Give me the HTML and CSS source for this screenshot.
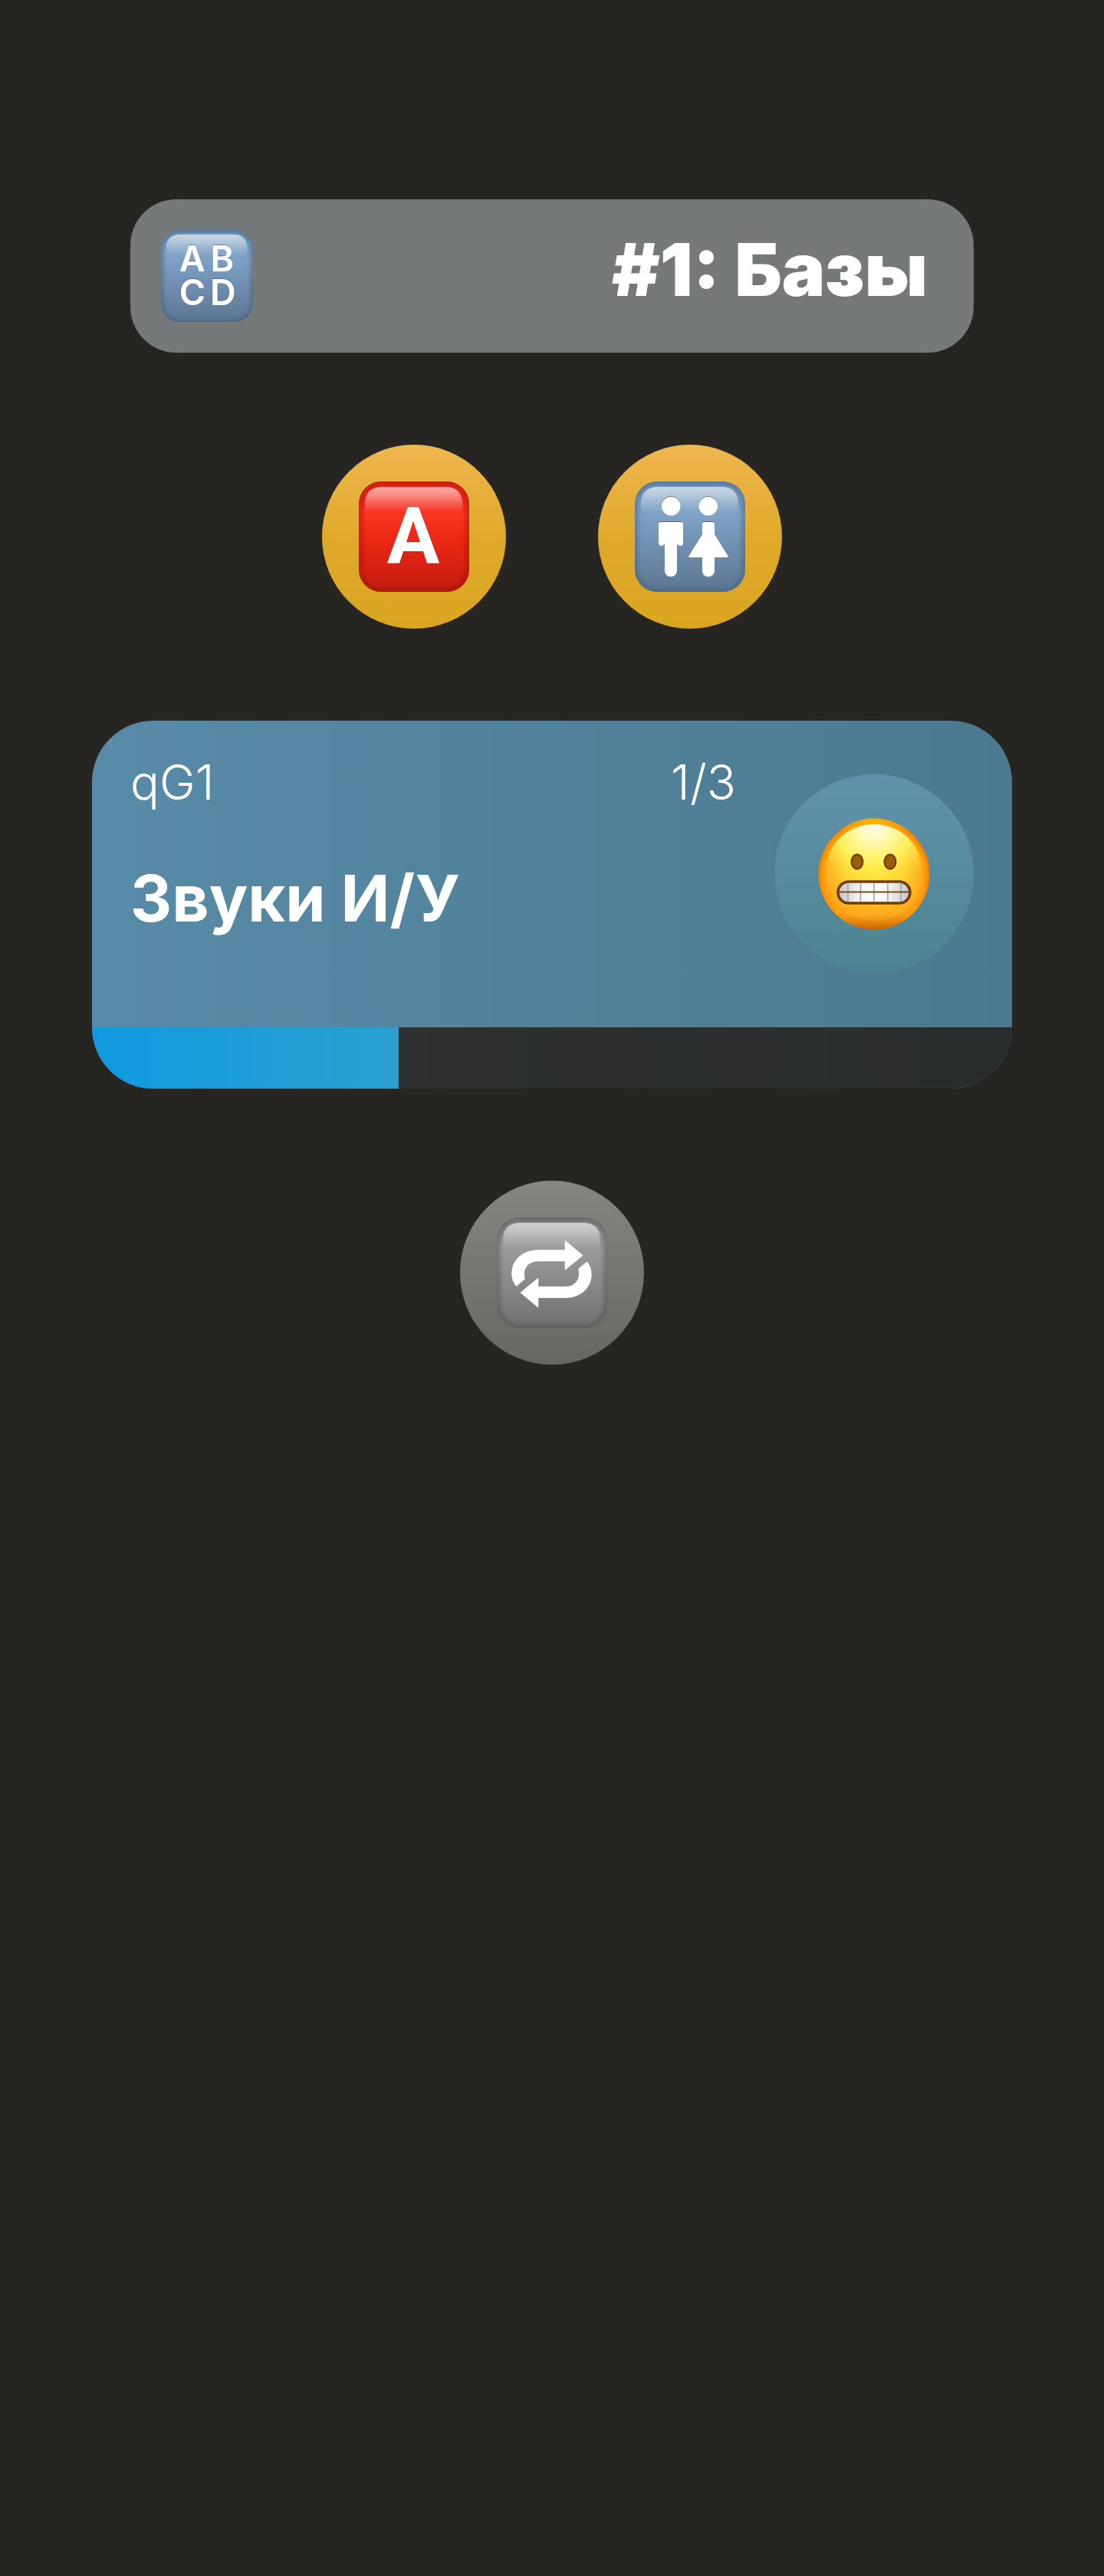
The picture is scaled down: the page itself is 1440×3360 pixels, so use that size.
FILE: index.html
```html
<!DOCTYPE html>
<html lang="ru">
<head>
<meta charset="utf-8">
<meta name="viewport" content="width=device-width, initial-scale=1">
<title>#1: Базы</title>
<link rel="stylesheet" href="styles.css">
</head>
<body>
<svg class="defs" aria-hidden="true">
  <defs>
    <linearGradient id="blue" x2="0" y2="1">
      <stop offset="0" stop-color="#6f93b8"/><stop offset=".28" stop-color="#7fa3c8"/><stop offset="1" stop-color="#5c7690"/>
    </linearGradient>
    <linearGradient id="red" x2="0" y2="1">
      <stop offset="0" stop-color="#f22314"/><stop offset=".3" stop-color="#fa3422"/><stop offset=".55" stop-color="#ea2614"/><stop offset="1" stop-color="#c41d10"/>
    </linearGradient>
    <linearGradient id="grey" x2="0" y2="1">
      <stop offset="0" stop-color="#858585"/><stop offset=".28" stop-color="#9b9b9b"/><stop offset="1" stop-color="#717171"/>
    </linearGradient>
    <linearGradient id="shine" x2="0" y2="1">
      <stop offset="0" stop-color="#fff" stop-opacity=".62"/><stop offset=".35" stop-color="#fff" stop-opacity=".45"/><stop offset="1" stop-color="#fff" stop-opacity="0"/>
    </linearGradient>
    <filter id="soft" x="-10%" y="-10%" width="120%" height="120%"><feGaussianBlur stdDeviation="3"/></filter>
    <filter id="drop" x="-10%" y="-10%" width="120%" height="120%"><feDropShadow dx="0" dy="-1" stdDeviation=".4" flood-color="#555" flood-opacity=".7"/></filter>
    <clipPath id="tile-clip"><rect width="144" height="144" rx="29"/></clipPath>
    <g id="tile-gloss">
      <g clip-path="url(#tile-clip)">
        <rect width="144" height="144" rx="29" fill="none" stroke-width="8" stroke-opacity=".55" filter="url(#soft)"/>
      </g>
      <path d="M8 40V30Q8 7 31 7H113Q135 7 135 30V40Z" fill="url(#shine)" stroke="none"/>
    </g>
    <path id="arrow" d="M112.500 49.500L88.700 29.500V42.300H55C34 42.300 19.300 55 19.300 73.700C19.300 80 21.500 85.500 25.500 90L36.800 80.300Q36 77.500 36 73.700C36 64 43 57.300 54 57.300H88.700V69Z"/>
    <radialGradient id="face" cx=".5" cy=".5" r=".5">
      <stop offset="0" stop-color="#ffdc2c"/><stop offset=".5" stop-color="#ffcc28"/><stop offset=".8" stop-color="#ffb020"/><stop offset=".93" stop-color="#fb9a0c"/><stop offset="1" stop-color="#ee7e00"/>
    </radialGradient>
    <linearGradient id="face-low" x2="0" y2="1">
      <stop offset="0" stop-color="#ffd000" stop-opacity=".6"/><stop offset=".12" stop-color="#ffc000" stop-opacity="0"/><stop offset=".55" stop-color="#ff9f14" stop-opacity="0"/><stop offset=".85" stop-color="#ffa31a" stop-opacity=".7"/><stop offset="1" stop-color="#c86400"/>
    </linearGradient>
    <radialGradient id="face-shine" cx=".5" cy="0" r=".68">
      <stop offset="0" stop-color="#fffdf0"/><stop offset=".25" stop-color="#fffab8"/><stop offset=".6" stop-color="#fff55a" stop-opacity=".9"/><stop offset="1" stop-color="#ffe040" stop-opacity=".1"/>
    </radialGradient>
    <linearGradient id="teeth">
      <stop offset="0" stop-color="#c4c4c8"/><stop offset=".3" stop-color="#f4f4f4"/><stop offset=".5" stop-color="#fff"/><stop offset=".7" stop-color="#f4f4f4"/><stop offset="1" stop-color="#c4c4c8"/>
    </linearGradient>
  </defs>
</svg>

<main class="page">
  <header class="topic">
    <svg class="topic-icon" viewBox="0 0 144 144" role="img" aria-label="Алфавит">
      <rect width="144" height="144" rx="29" fill="url(#blue)"/>
      <use href="#tile-gloss" stroke="#3e5b7a"/>
      <text class="tile-letters" filter="url(#drop)"><tspan x="49" y="65">A</tspan><tspan x="96" y="65">B</tspan><tspan x="49" y="117">C</tspan><tspan x="97" y="117">D</tspan></text>
    </svg>
    <h1 class="topic-title">#1: Базы</h1>
  </header>

  <div class="actions">
    <button class="round round-gold" type="button" aria-label="Буквы">
      <svg class="icon" viewBox="0 0 144 144">
        <rect width="144" height="144" rx="29" fill="url(#red)"/>
        <use href="#tile-gloss" stroke="#8c1208"/>
        <text class="tile-letter" x="71" y="106" filter="url(#drop)">A</text>
      </svg>
    </button>
    <button class="round round-gold" type="button" aria-label="Пары">
      <svg class="icon" viewBox="0 0 144 144">
        <rect width="144" height="144" rx="29" fill="url(#blue)"/>
        <use href="#tile-gloss" stroke="#3e5b7a"/>
        <g fill="#fff" filter="url(#drop)">
          <circle cx="47.300" cy="32.300" r="12.200"/>
          <path d="M34 53H60Q63 53 63 56V80C63 85 57 85 55 81V116C55 127 39 127 39 116V81C37 85 31 85 31 80V56Q31 53 34 53Z"/>
          <circle cx="95.700" cy="32.300" r="12.200"/>
          <path d="M91 53H101Q104 53 104 56V69L121.500 97Q122 99 120 99H104V116C104 127 88 127 88 116V99H72Q69.500 99 70.500 97L88 69V56Q88 53 91 53Z"/>
        </g>
      </svg>
    </button>
  </div>

  <section class="lesson">
    <div class="lesson-body">
      <div class="lesson-text">
        <div class="lesson-meta"><span>qG1</span><span>1/3</span></div>
        <h2 class="lesson-title">Звуки И/У</h2>
      </div>
      <div class="mood">
        <svg class="icon" viewBox="0 0 144 144" role="img" aria-label="Гримаса">
          <circle cx="72" cy="72" r="72.500" fill="url(#face)"/>
          <circle cx="72" cy="72" r="72.500" fill="url(#face-low)"/>
          <ellipse cx="72" cy="70" rx="64" ry="63" fill="url(#face-shine)"/>
          <g fill="#9a5c06" stroke="#6b3a02" stroke-width="2">
            <ellipse cx="50" cy="56" rx="7.500" ry="9.500"/><ellipse cx="93" cy="56" rx="7.500" ry="9.500"/>
          </g>
          <rect x="25" y="82" width="94" height="28" rx="14" fill="url(#teeth)" stroke="#6e3b05" stroke-width="3.500"/>
          <path d="M38 83.500V108.500M54.500 83.500V108.500M72 83.500V108.500M90 83.500V108.500M107 83.500V108.500" stroke="#9aa0a6" stroke-width="1.500"/>
          <path d="M26 95.500H118" stroke="#7c4a1a" stroke-width="2"/>
        </svg>
      </div>
    </div>
    <div class="progress" role="progressbar" aria-label="Прогресс" aria-valuemin="0" aria-valuemax="3" aria-valuenow="1">
      <div class="progress-fill" style="width: 33.333%"></div>
    </div>
  </section>

  <div class="actions">
    <button class="round round-grey" type="button" aria-label="Повторить">
      <svg class="icon" viewBox="0 0 144 144">
        <rect width="144" height="144" rx="29" fill="url(#grey)"/>
        <use href="#tile-gloss" stroke="#484848"/>
        <use href="#arrow" fill="#fff"/>
        <use href="#arrow" fill="#fff" transform="rotate(180 71.500 73.700)"/>
      </svg>
    </button>
  </div>
</main>
</body>
</html>
```
FILE: styles.css
```css
* {
  box-sizing: border-box;
}

body {
  margin: 0;
  min-height: 100vh;
  background: #262521;
  color: #fff;
  font-family: Inter, "Noto Sans", sans-serif;
}

.defs {
  position: absolute;
  width: 0;
  height: 0;
}

.page {
  display: flex;
  flex-direction: column;
  gap: 120px;
  padding: 260px 120px 120px;
}

.topic {
  display: flex;
  justify-content: space-between;
  align-items: flex-start;
  margin: 0 50px;
  padding: 40px 60px 40px 40px;
  border-radius: 60px;
  background: #757979;
}

.topic-icon {
  display: block;
  width: 120px;
  height: 120px;
}

.tile-letters {
  fill: #fff;
  font: 600 56px Inter, sans-serif;
  text-anchor: middle;
}

.tile-letter {
  fill: #fff;
  font: 700 102px Roboto, sans-serif;
  text-anchor: middle;
}

.topic-title {
  margin: 0;
  font-size: 95px;
  font-weight: 900;
  line-height: 104px;
}

.actions {
  display: flex;
  justify-content: center;
  gap: 120px;
}

.round {
  display: flex;
  justify-content: center;
  align-items: center;
  width: 240px;
  height: 240px;
  padding: 0;
  border: 0;
  border-radius: 50%;
  cursor: pointer;
}

.round-gold {
  background: linear-gradient(#efb74f, #dfaa2b 50%, #daa520);
}

.round-grey {
  background: linear-gradient(#85867f, #666761);
}

.icon {
  display: block;
  width: 144px;
  height: 144px;
  overflow: visible;
}

.lesson {
  overflow: hidden;
  border-radius: 80px;
  background: linear-gradient(90deg, #588ba8, #4b798e);
}

.lesson-body {
  display: flex;
  align-items: center;
  gap: 50px;
  min-height: 400px;
  padding: 50px;
}

.lesson-text {
  display: flex;
  flex: 1;
  flex-direction: column;
  align-self: flex-start;
  gap: 72px;
}

.lesson-meta {
  display: flex;
  justify-content: space-between;
  font-size: 63px;
  font-weight: 300;
  line-height: 60px;
}

.lesson-title {
  margin: 0;
  font-size: 84px;
  font-weight: 700;
  line-height: 100px;
}

.mood {
  display: flex;
  justify-content: center;
  align-items: center;
  width: 260px;
  height: 260px;
  border-radius: 50%;
  background: linear-gradient(#6093ab, #4b8490);
}

.progress {
  height: 80px;
  background: linear-gradient(90deg, #303234, #292c2d);
}

.progress-fill {
  height: 100%;
  background: linear-gradient(90deg, #1099df, #2aa0cf);
}
```
